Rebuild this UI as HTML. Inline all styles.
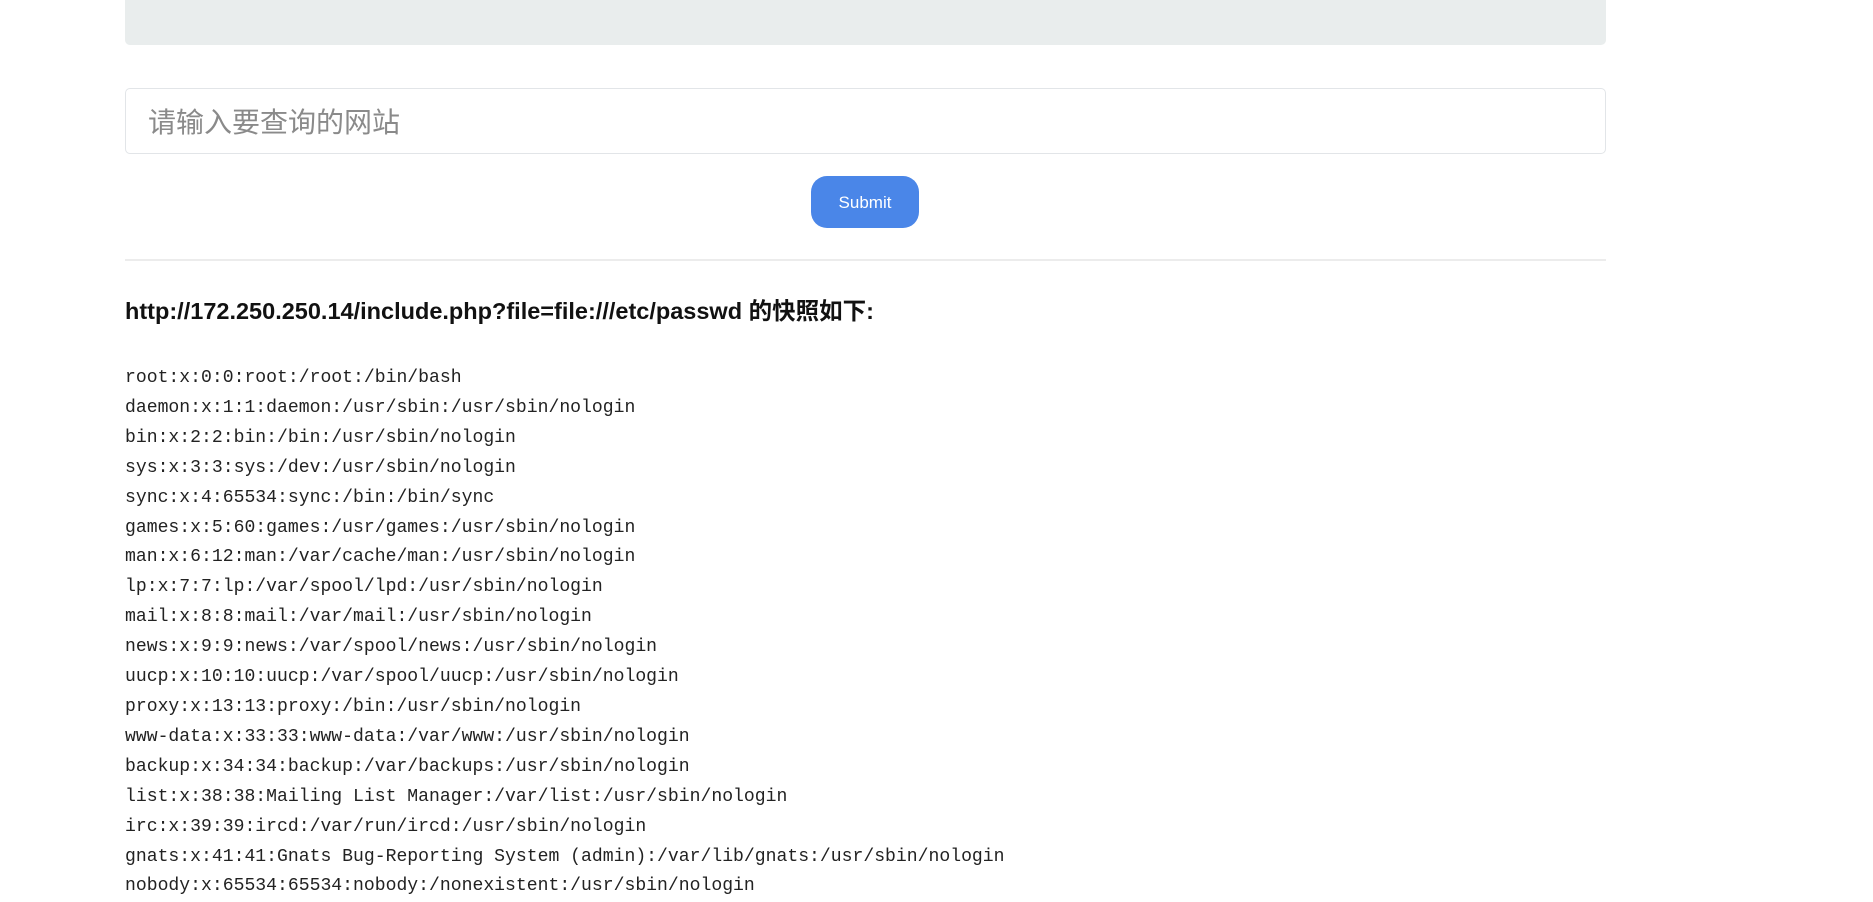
<!DOCTYPE html>
<html><head><meta charset="utf-8"><style>
body{margin:0;width:1873px;height:892px;overflow:hidden;background:#fff;font-family:"Liberation Sans","Noto Sans CJK SC",sans-serif;position:relative}
.panel{position:absolute;left:125px;top:0;width:1481px;height:45px;background:#e9eded;border-radius:0 0 5px 5px}
.input{position:absolute;left:125px;top:88px;width:1481px;height:66px;border:1px solid #e2e5e8;border-radius:5px;box-sizing:border-box}
.input span{position:absolute;left:22px;top:16px;font-size:28px;color:#8a8a8a;font-family:"Noto Sans CJK SC",sans-serif;line-height:32px}
.btn{position:absolute;left:811px;top:176px;width:108px;height:52px;background:#4a86e8;border-radius:16px;color:#fff;font-size:17px;text-align:center;line-height:54px}
.hr{position:absolute;left:125px;top:259px;width:1481px;height:2px;background:#ececec}
h3{position:absolute;left:125px;top:295px;margin:0;font-size:23.5px;font-weight:bold;color:#111;line-height:32px}
pre{position:absolute;left:125px;top:364px;margin:0;font-family:"Liberation Mono",monospace;font-size:18.1px;line-height:29.9px;color:#222}
</style></head><body>
<div class="panel"></div>
<div class="input"><span>请输入要查询的网站</span></div>
<div class="btn">Submit</div>
<div class="hr"></div>
<h3>http://172.250.250.14/include.php?file=file:///etc/passwd 的快照如下:</h3>
<pre>root:x:0:0:root:/root:/bin/bash
daemon:x:1:1:daemon:/usr/sbin:/usr/sbin/nologin
bin:x:2:2:bin:/bin:/usr/sbin/nologin
sys:x:3:3:sys:/dev:/usr/sbin/nologin
sync:x:4:65534:sync:/bin:/bin/sync
games:x:5:60:games:/usr/games:/usr/sbin/nologin
man:x:6:12:man:/var/cache/man:/usr/sbin/nologin
lp:x:7:7:lp:/var/spool/lpd:/usr/sbin/nologin
mail:x:8:8:mail:/var/mail:/usr/sbin/nologin
news:x:9:9:news:/var/spool/news:/usr/sbin/nologin
uucp:x:10:10:uucp:/var/spool/uucp:/usr/sbin/nologin
proxy:x:13:13:proxy:/bin:/usr/sbin/nologin
www-data:x:33:33:www-data:/var/www:/usr/sbin/nologin
backup:x:34:34:backup:/var/backups:/usr/sbin/nologin
list:x:38:38:Mailing List Manager:/var/list:/usr/sbin/nologin
irc:x:39:39:ircd:/var/run/ircd:/usr/sbin/nologin
gnats:x:41:41:Gnats Bug-Reporting System (admin):/var/lib/gnats:/usr/sbin/nologin
nobody:x:65534:65534:nobody:/nonexistent:/usr/sbin/nologin</pre>
</body></html>
